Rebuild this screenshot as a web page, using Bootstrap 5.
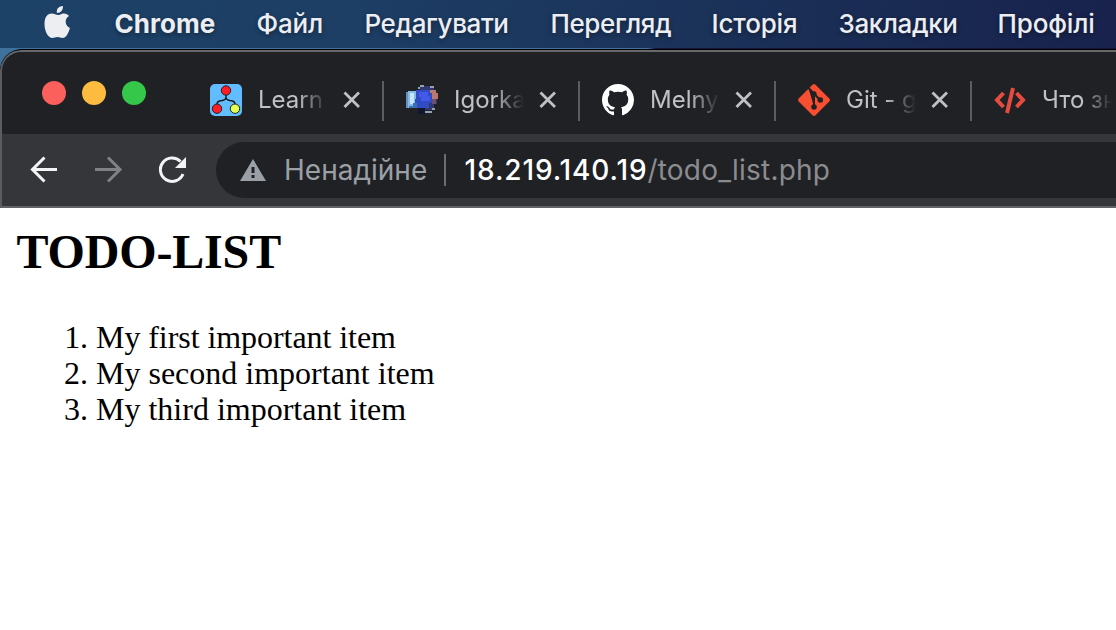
<!DOCTYPE html>
<html lang="uk">
<head>
<meta charset="utf-8">
<title>TODO-LIST</title>
<link href="https://cdn.jsdelivr.net/npm/bootstrap@5.3.0/dist/css/bootstrap.min.css" rel="stylesheet">
<style>
body{width:1116px;height:630px;overflow:hidden;background:#fff;font-family:Inter,"Liberation Sans",sans-serif}
svg{display:block;flex:none}
.menubar{height:48px;background:linear-gradient(90deg,#1d4267 0,#1d3e65 350px,#1b3259 700px,#18224d 1116px);color:#eceef2;font-size:26px;font-weight:500;line-height:48px;text-shadow:0 2px 5px #0006}
.menu-grid{display:grid;grid-template-columns:70.500px 142px 108px 186px 161px 127px 159px 118px;padding-left:44px}
.menu-grid span{white-space:nowrap;letter-spacing:-.4px}
.menu-grid .app-name{letter-spacing:.05px}
.menu-grid .loose{letter-spacing:-.15px}
.desktop{background:linear-gradient(90deg,#3e719b 0,#3e719b 648px,#11163a 655px);height:160px;padding-top:1px}
.browser{height:159px;border-top-left-radius:22px;border-top:1px solid #000;background:#202124;overflow:hidden}
.chrome-edge{height:158px;border-top:2px solid #68696c;border-left:2px solid #5b5c60;border-top-left-radius:21px;overflow:hidden}
.tabs-row{height:82px}
.dots{padding:29px 0 0 40px;width:208px;gap:16px}
.dots i{width:24px;height:24px;border-radius:50%}
.tab-item{width:196px;height:38px;margin-top:29px;color:#bfc1c5;font-size:24px;position:relative}
.tab-item+.tab-item::before{content:"";position:absolute;left:-24px;top:0;width:2px;height:40px;background:#5b5d61}
.tab-name{width:70px;margin-left:16px;overflow:hidden;white-space:nowrap;line-height:36px;-webkit-mask-image:linear-gradient(90deg,#000 40px,transparent 70px)}
.tab-close{margin-left:15px}
.toolbar-row{height:74px;background:#35363a;border-bottom:2px solid #626367}
.address{height:56px;width:900px;border-radius:28px 0 0 28px;background:#202124;font-size:28px;line-height:56px;white-space:nowrap}
.security{width:160px;margin-left:18px;color:#9aa0a6}
.host{margin-left:18.500px;color:#fff;font-weight:450;letter-spacing:.88px}
.url-path{color:#8b8c8f;letter-spacing:.2px}
.divider{width:2px;height:32px;background:#6b6d71}
.page{font-family:"Liberation Serif",serif;color:#000;padding:16px}
.page h1{font-size:48px;font-weight:700;line-height:56px;letter-spacing:-.15px;margin:0 0 39px .5px}
.page ol{font-size:32px;line-height:36px;padding-left:80px;margin:0}
.page li:first-child{letter-spacing:-.06px}
</style>
<script src="https://cdn.jsdelivr.net/npm/bootstrap@5.3.0/dist/js/bootstrap.bundle.min.js"></script>
</head>
<body>
<header class="menubar"><div class="menu-grid">
<svg width="27" height="48" viewBox="0 0 27 48" fill="#eceef2"><path d="M13 13C12 9 15 6 19 6C19 10 17 13 13 13ZM14 15C17 15 17 13.500 20 13.500C22 13.500 24 14.500 25 16C20 19 21 26 26 28C24.500 33 22 38 18.500 38C16.500 38 16 37 13.500 37C11 37 10.500 38 8.500 38C4 38 .5 31 .5 24C.5 17 3.500 13.500 7.500 13.500C10.500 13.500 12 15 14 15Z"/></svg>
<span class="fw-bold app-name">Chrome</span><span class="loose">Файл</span><span>Редагувати</span><span>Перегляд</span><span class="loose">Історія</span><span>Закладки</span><span class="loose">Профілі</span>
</div></header>
<div class="desktop"><div class="browser"><div class="chrome-edge">
<div class="tabs-row d-flex">
<div class="dots d-flex flex-shrink-0"><i style="background:#fc605c"></i><i style="background:#fdbc40"></i><i style="background:#34c749"></i></div>
<div class="tab-item d-flex flex-shrink-0 align-items-center">
<svg width="32" height="32" viewBox="0 0 32 32"><rect width="32" height="32" rx="5" fill="#61bdff"/><path d="M16 10V13Q16 16 12 16.500Q7 17 7 20M16 13Q16 16 20 16.500Q25 17 25 20" fill="none" stroke="#111" stroke-width="1.300"/><g stroke="#222" stroke-width="1"><circle cx="16" cy="6.500" r="4.700" fill="#ff1c24"/><circle cx="7" cy="24.700" r="4.700" fill="#ff1c24"/><circle cx="25" cy="24.700" r="4.700" fill="#e4ff4e"/></g></svg>
<span class="tab-name">Learn</span><svg class="tab-close" width="18" height="18" viewBox="0 0 18 18" stroke="#bfc1c5" stroke-width="2.800"><path d="M1.500 1.500 16 16M16 1.500 1.500 16"/></svg></div>
<div class="tab-item d-flex flex-shrink-0 align-items-center">
<svg width="32" height="32" viewBox="0 0 32 32" shape-rendering="crispEdges"><path d="M14 2h10v2h4v4h3v12h-3v6H14Z" fill="#303a70"/><path d="M14 1h4v2h-4ZM12 3h2v2h-2ZM24 2h4v2h-4ZM18 27h8v2h-8ZM26 24h3v2h-3Z" fill="#99a0b3"/><path d="M24 6h6v3h2v6h-6v-5h-2Z" fill="#b9786c"/><path d="M26 15h4v5h-4Z" fill="#6c4e6e"/><path d="M0 8h4v16H0Z" fill="#668fc0"/><path d="M2 7h9v17H2Z" fill="#86b9e6"/><path d="M4 9h4v11H4Z" fill="#c5e7f6"/><path d="M10 6h14v3h2v10h-3v5H9Z" fill="#304cc5"/><path d="M13 8h9v4h2v5h-9v-4h-2Z" fill="#4259ea"/><path d="M7 19h4v5H3v-2h4Z" fill="#3d70b2"/><path d="M12 24h7v6h-7Z" fill="#11152f"/></svg>
<span class="tab-name">Igorka</span><svg class="tab-close" width="18" height="18" viewBox="0 0 18 18" stroke="#bfc1c5" stroke-width="2.800"><path d="M1.500 1.500 16 16M16 1.500 1.500 16"/></svg></div>
<div class="tab-item d-flex flex-shrink-0 align-items-center">
<svg width="32" height="32" viewBox="0 0 16 16" fill="#fff"><path d="M8 0C3.580 0 0 3.580 0 8c0 3.540 2.290 6.530 5.470 7.590.4.070.55-.17.55-.38 0-.19-.01-.82-.01-1.490-2.010.37-2.530-.49-2.690-.94-.09-.23-.48-.94-.82-1.130-.28-.15-.68-.52-.01-.53.63-.01 1.080.58 1.230.82.72 1.210 1.870.87 2.330.66.07-.52.28-.87.51-1.070-1.780-.2-3.640-.89-3.640-3.950 0-.87.31-1.590.82-2.150-.08-.2-.36-1.020.08-2.120 0 0 .67-.21 2.200.82.64-.18 1.320-.27 2-.27s1.360.09 2 .27c1.530-1.040 2.200-.82 2.200-.82.44 1.100.16 1.920.08 2.120.51.56.82 1.270.82 2.150 0 3.070-1.870 3.750-3.650 3.950.29.25.54.73.54 1.480 0 1.070-.01 1.930-.01 2.200 0 .21.15.46.55.38A8.010 8.010 0 0 0 16 8c0-4.420-3.580-8-8-8"/></svg>
<span class="tab-name">Melny</span><svg class="tab-close" width="18" height="18" viewBox="0 0 18 18" stroke="#bfc1c5" stroke-width="2.800"><path d="M1.500 1.500 16 16M16 1.500 1.500 16"/></svg></div>
<div class="tab-item d-flex flex-shrink-0 align-items-center">
<svg width="32" height="32" viewBox="0 0 32 32"><path d="M14.500.7.700 14.500Q-.5 16 .7 17.500L14.500 31.300Q16 32.500 17.500 31.300L31.300 17.500Q32.500 16 31.300 14.500L17.500.7Q16-.5 14.500.7Z" fill="#f84e31"/><g stroke="#202124" stroke-width="2" fill="#202124"><path d="M10.500 4 16 9.500V23M16 9.500 22 16"/><circle cx="16" cy="9.800" r="1.600"/><circle cx="22.300" cy="16" r="1.800"/><circle cx="16" cy="23" r="1.800"/></g></svg>
<span class="tab-name">Git - g</span><svg class="tab-close" width="18" height="18" viewBox="0 0 18 18" stroke="#bfc1c5" stroke-width="2.800"><path d="M1.500 1.500 16 16M16 1.500 1.500 16"/></svg></div>
<div class="tab-item d-flex flex-shrink-0 align-items-center">
<svg width="32" height="32" viewBox="0 0 32 32" fill="none" stroke="#e64b40" stroke-width="4"><path d="M9.500 9 3 16l6.500 7M22.500 9l6.500 7-6.500 7M19 4l-6 25"/></svg>
<span class="tab-name">Что зн</span></div>
</div>
<div class="toolbar-row d-flex align-items-center">
<svg width="214" height="72" viewBox="0 0 214 72" fill="none" stroke-width="3"><path d="M55 35.500H31M42.500 23.500 30.500 35.500 42.500 47.500" stroke="#f3f4f6"/><path d="M93 35.500h24M106 23.500 118 35.500 106 47.500" stroke="#808185"/><path d="M181 40A11.700 11.700 0 1 1 178.500 27.500" stroke="#f3f4f6"/><path d="M184 23v11h-11z" fill="#f3f4f6"/></svg>
<div class="address d-flex align-items-center">
<svg class="ms-4" width="26" height="22" viewBox="0 0 26 22" fill="#9aa0a6"><path fill-rule="evenodd" d="M13 0 26 22H0ZM11.500 8h3v6h-3zM11.500 16h3v3h-3z"/></svg>
<span class="security">Ненадійне</span><i class="divider"></i><span class="host">18.219.140.19</span><span class="url-path">/todo_list.php</span>
</div></div>
</div></div></div>
<main class="page"><h1>TODO-LIST</h1><ol><li>My first important item</li><li>My second important item</li><li>My third important item</li></ol></main>
</body>
</html>
